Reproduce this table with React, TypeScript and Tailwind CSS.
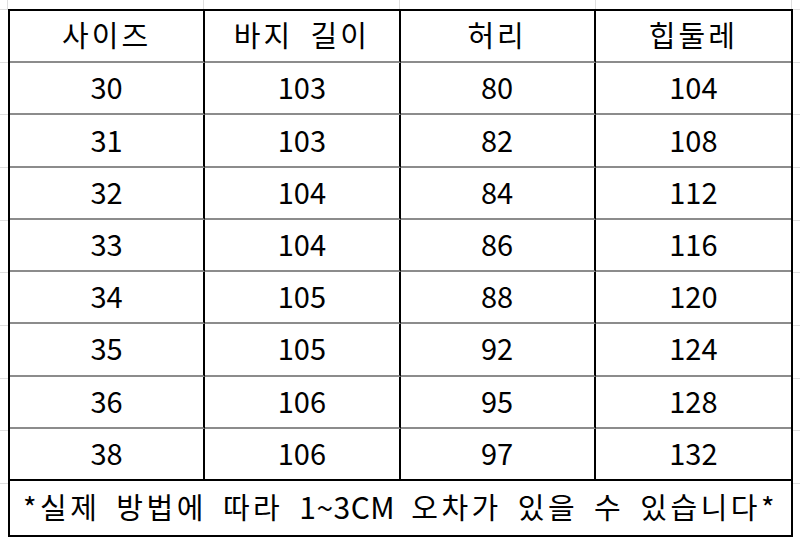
const rows = [
  ['30', '103', '80', '104'],
  ['31', '103', '82', '108'],
  ['32', '104', '84', '112'],
  ['33', '104', '86', '116'],
  ['34', '105', '88', '120'],
  ['35', '105', '92', '124'],
  ['36', '106', '95', '128'],
  ['38', '106', '97', '132'],
];

const headers = ['사이즈', '바지 길이', '허리', '힙둘레'];

export default function App() {
  return (
    <div
      className="w-[800px] h-[547px] bg-white overflow-hidden text-black"
      style={{ fontFamily: '"Noto Sans CJK KR", "Noto Sans", sans-serif' }}
    >
      {/* faint sheet gridlines above the table */}
      <div className="flex h-[9px]">
        <div className="w-[8px] border-r border-[#dedede]" />
        <div className="w-[196px] border-r border-[#dedede]" />
        <div className="w-[196px] border-r border-[#dedede]" />
        <div className="w-[196px] border-r border-[#dedede]" />
        <div className="w-[196px] border-r border-[#dedede]" />
      </div>
      <div className="flex">
        {/* faint row lines on the left */}
        <div className="w-[8px] h-[528px] grid grid-rows-[repeat(9,minmax(0,1fr))_54px]">
          {Array.from({ length: 10 }).map((_, i) => (
            <div key={i} className="border-t border-[#dedede]" />
          ))}
        </div>
        <div className="w-[785px] h-[528px] border-2 border-black grid grid-cols-4 grid-rows-[repeat(9,minmax(0,1fr))_54px] text-[29px] leading-none">
          {headers.map((h, c) => (
            <div
              key={h}
              className={`flex items-center justify-center pb-[3px] tracking-[3px] [word-spacing:8px] border-b-2 border-b-[#8c8c8c] ${c < 3 ? 'border-r-2 border-r-black' : ''}`}
            >
              {h}
            </div>
          ))}
          {rows.map((r, i) =>
            r.map((v, c) => (
              <div
                key={`${i}-${c}`}
                className={`flex items-center justify-center pb-[3px] ${
                  i < rows.length - 1 ? 'border-b-2 border-b-[#8c8c8c]' : 'border-b-2 border-b-black'
                } ${c < 3 ? 'border-r-2 border-r-black' : ''}`}
              >
                {v}
              </div>
            ))
          )}
          <div className="col-span-4 flex items-center justify-center pb-[3px] whitespace-pre tracking-[3.5px] [word-spacing:6px]">
            *실제 방법에 따라 <span className="tracking-[0.5px] text-[30px]">1~3CM</span> 오차가 있을 수 있습니다*
          </div>
        </div>
        <div className="w-[7px] h-[528px] grid grid-rows-[repeat(9,minmax(0,1fr))_54px]">
          {Array.from({ length: 10 }).map((_, i) => (
            <div key={i} className="border-t border-[#dedede]" />
          ))}
        </div>
      </div>
    </div>
  );
}
